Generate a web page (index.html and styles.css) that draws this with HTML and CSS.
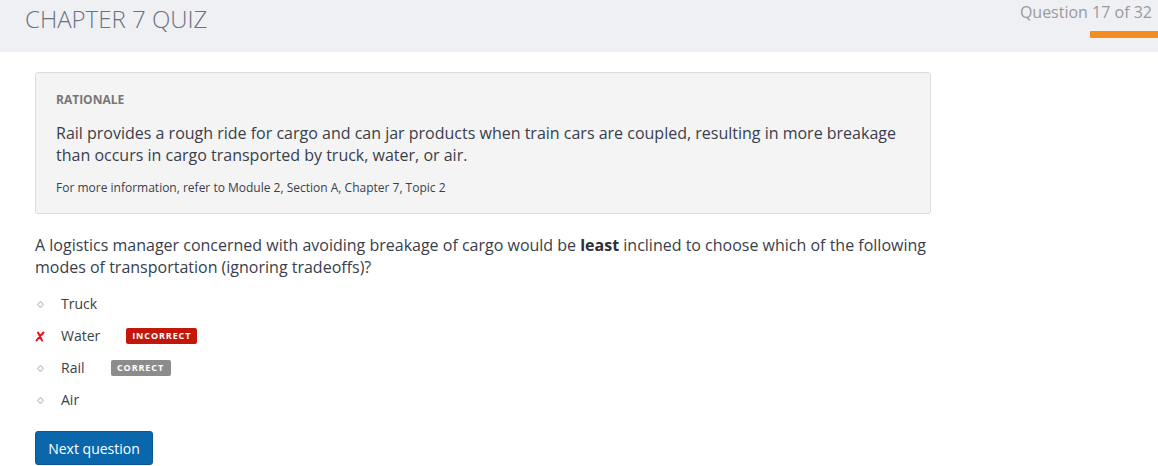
FILE: index.html
```html
<!DOCTYPE html>
<html>
<head>
<meta charset="utf-8">
<link rel="stylesheet" href="styles.css">
</head>
<body>
<header class="top">
  <h1 class="title">CHAPTER 7 QUIZ</h1>
  <div class="progress">
    <div class="progress-text">Question 17 of 32</div>
    <div class="progress-bar"></div>
  </div>
</header>
<main class="content">
  <section class="rationale">
    <h2 class="rationale-head">RATIONALE</h2>
    <p class="rationale-text">Rail provides a rough ride for cargo and can jar products when train cars are coupled, resulting in more breakage than occurs in cargo transported by truck, water, or air.</p>
    <p class="rationale-ref">For more information, refer to Module 2, Section A, Chapter 7, Topic 2</p>
  </section>
  <p class="question">A logistics manager concerned with avoiding breakage of cargo would be <b>least</b> inclined to choose which of the following modes of transportation (ignoring tradeoffs)?</p>
  <ul class="options">
    <li class="option"><span class="mark"><svg width="7" height="7" viewBox="0 0 7 7"><path d="M3.5 0.5 L6.5 3.5 L3.5 6.5 L0.5 3.5 Z" fill="none" stroke="#c8c8c8" stroke-width="1.2"/></svg></span><span class="label">Truck</span></li>
    <li class="option"><span class="mark"><svg width="10" height="11" viewBox="0 0 10 11"><path d="M3 1.5 Q5 5 7 9.5 M8.5 1.5 Q5 5 1.5 9.5" fill="none" stroke="#e8101a" stroke-width="2" stroke-linecap="round"/></svg></span><span class="label">Water</span><span class="badge badge-wrong">INCORRECT</span></li>
    <li class="option"><span class="mark"><svg width="7" height="7" viewBox="0 0 7 7"><path d="M3.5 0.5 L6.5 3.5 L3.5 6.5 L0.5 3.5 Z" fill="none" stroke="#c8c8c8" stroke-width="1.2"/></svg></span><span class="label">Rail</span><span class="badge badge-right">CORRECT</span></li>
    <li class="option"><span class="mark"><svg width="7" height="7" viewBox="0 0 7 7"><path d="M3.5 0.5 L6.5 3.5 L3.5 6.5 L0.5 3.5 Z" fill="none" stroke="#c8c8c8" stroke-width="1.2"/></svg></span><span class="label">Air</span></li>
  </ul>
  <button class="next">Next question</button>
</main>
</body>
</html>
```
FILE: styles.css
```css
* { box-sizing: border-box; }
html, body { margin: 0; padding: 0; }
body {
  font-family: "Open Sans", "Liberation Sans", sans-serif;
  color: #393e4b;
  background: #fff;
  width: 1158px;
  height: 466px;
  overflow: hidden;
}
.top {
  background: #eff0f4;
  height: 52px;
  display: flex;
  justify-content: space-between;
  align-items: flex-start;
}
.title {
  margin: 0;
  padding: 3px 0 0 25px;
  font-weight: 300;
  font-size: 24px;
  line-height: 32px;
  color: #6a7283;
}
.progress {
  display: flex;
  flex-direction: column;
  align-items: flex-end;
  padding-top: 1px;
}
.progress-text {
  font-size: 16px;
  line-height: 22px;
  color: #9a9a9e;
  padding-right: 6px;
}
.progress-bar {
  margin-top: 8px;
  width: 68px;
  height: 7px;
  background: #f48c1f;
  border-radius: 1px 0 0 1px;
}
.content {
  padding: 20px 0 0 35px;
  width: 931px;
}
.rationale {
  background: #f4f4f4;
  border: 1px solid #dcdcdc;
  border-radius: 3px;
  padding: 18px 20px 17px 20px;
  height: 142px;
}
.rationale-head {
  margin: 0;
  font-size: 12px;
  font-weight: 700;
  color: #777;
  line-height: 17px;
}
.rationale-text {
  margin: 14px 0 0 0;
  font-size: 16px;
  line-height: 22px;
  color: #393e4b;
}
.rationale-ref {
  margin: 13px 0 0 0;
  font-size: 12px;
  line-height: 17px;
  color: #393e4b;
}
.question {
  margin: 20px 0 0 0;
  font-size: 16px;
  line-height: 22px;
}
.question b { font-weight: 700; color: #2d2f35; }
.options {
  list-style: none;
  margin: 10px 0 0 0;
  padding: 0;
}
.option {
  display: flex;
  align-items: center;
  height: 32px;
  font-size: 14px;
}
.mark {
  width: 26px;
  display: flex;
  justify-content: flex-start;
  align-items: center;
  padding-left: 2px;
}
.option:nth-child(2) .mark { padding-left: 0; }
.mark svg { display: block; }
.label { line-height: 20px; }
.badge {
  display: inline-block;
  font-size: 9px;
  font-weight: 700;
  letter-spacing: 0.9px;
  color: #fff;
  line-height: 16px;
  height: 16px;
  border-radius: 2px;
  text-align: center;
}
.badge-wrong {
  background: #c3170b;
  margin-left: 26px;
  width: 71px;
}
.badge-right {
  background: #8c8c8c;
  margin-left: 26px;
  width: 60px;
}
.next {
  margin-top: 15px;
  display: block;
  width: 118px;
  height: 34px;
  background: #0a67ac;
  color: #fff;
  border: 1px solid #075796;
  border-radius: 3px;
  font-family: "Open Sans", "Liberation Sans", sans-serif;
  font-size: 14px;
  padding: 0;
}
```
